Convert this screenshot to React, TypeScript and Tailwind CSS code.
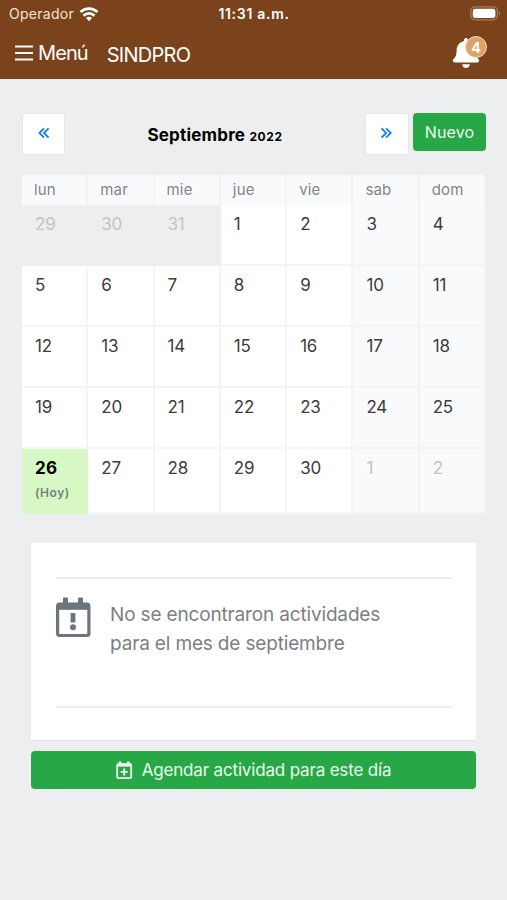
import { useState } from "react";
import clsx from "clsx";
import { BiChevronsLeft, BiChevronsRight } from "react-icons/bi";
import { FaBell } from "react-icons/fa";

const weekDays = ["lun", "mar", "mie", "jue", "vie", "sab", "dom"];

const weeks = [
    [29, 30, 31, 1, 2, 3, 4],
    [5, 6, 7, 8, 9, 10, 11],
    [12, 13, 14, 15, 16, 17, 18],
    [19, 20, 21, 22, 23, 24, 25],
    [26, 27, 28, 29, 30, 1, 2],
];

const today = 26;

function CalendarAlertIcon() {
    return (
        <svg className="shrink-0" width="35" height="41" viewBox="0 0 35 41" fill="currentColor">
            <rect x="7" y="0.5" width="5" height="7" rx="1" />
            <rect x="22" y="0.5" width="5" height="7" rx="1" />
            <rect x="1.6" y="7" width="31.3" height="31.5" rx="2" fill="none" stroke="currentColor" strokeWidth="3.2" />
            <path d="M1.5 6.5h31.5v6.3H1.5z" />
            <rect x="14.6" y="16" width="4.8" height="9.6" rx="0.6" />
            <circle cx="17" cy="30.3" r="3" />
        </svg>
    );
}

function CalendarPlusIcon() {
    return (
        <svg className="shrink-0" width="17" height="19" viewBox="0 0 17 19" fill="currentColor">
            <rect x="2.8" y="0.6" width="2.6" height="4" rx="0.6" />
            <rect x="11" y="0.6" width="2.6" height="4" rx="0.6" />
            <rect x="1.2" y="3.2" width="14" height="14" rx="1.2" fill="none" stroke="currentColor" strokeWidth="1.8" />
            <path d="M1 2.6h14.4v3H1z" />
            <path d="M8.2 7.4v7M4.7 10.9h7" stroke="currentColor" strokeWidth="1.9" />
        </svg>
    );
}

function StatusBar() {
    return (
        <div className="grid h-[28px] grid-cols-3 items-center pr-[6px] pl-[9px] text-[14px] leading-[28px]">
            <div className="flex items-center gap-[5px]">
                <span className="tracking-[0.28px] text-[#f3e4da]">Operador</span>
                <svg width="20" height="15" viewBox="0 0 20 15" fill="none" stroke="#fff" strokeWidth="2.7">
                    <path d="M1.5 5a12.2 12.2 0 0 1 17 0" />
                    <path d="M4.5 8.7a7.8 7.8 0 0 1 11 0" />
                    <path d="M10 14.3l-3-3.2a4.3 4.3 0 0 1 6 0z" fill="#fff" stroke="none" />
                </svg>
            </div>
            <span className="-ml-[2px] text-center font-semibold tracking-[0.7px] whitespace-nowrap">11:31 a.m.</span>
            <svg className="ml-auto" width="31" height="16" viewBox="0 0 31 16" fill="none">
                <rect x="0.8" y="0.8" width="26.6" height="13" rx="4" stroke="#a07b62" strokeWidth="1.3" />
                <rect x="2.8" y="2.7" width="22.6" height="9.2" rx="2.2" fill="#fff" />
                <path d="M29 5c1.6.8 1.6 3.8 0 4.6z" fill="#a07b62" />
            </svg>
        </div>
    );
}

function Header() {
    return (
        <header className="h-[79px] bg-[#7b431b] text-white">
            <StatusBar />
            <div className="flex h-[50px] items-center pr-[20px] pl-[15px] text-[20px]">
                <button className="flex items-center gap-[5px]">
                    <svg width="18" height="16" viewBox="0 0 18 16" stroke="#fff" strokeWidth="2">
                        <path d="M0 1.5h18M0 8h18M0 14.5h18" />
                    </svg>
                    <span className="tracking-[-0.9px]">Menú</span>
                </button>
                <span className="mt-[4px] ml-[19px] tracking-[-0.75px]">SINDPRO</span>
                <button className="relative ml-auto h-[30px] w-[35px]">
                    <FaBell className="-ml-[1px] text-[30px]" />
                    <span className="absolute -top-[2px] right-0 flex size-[22px] items-center justify-center rounded-full border border-[#f6dcc0] bg-[#dca366] text-[14px] font-bold">
                        4
                    </span>
                </button>
            </div>
        </header>
    );
}

export default function App() {
    const [selected, setSelected] = useState(today);

    return (
        <div className="h-[900px] w-[507px] overflow-hidden bg-[#eceef0] font-['Inter',sans-serif]">
            <Header />

            <main className="pt-[34px]">
                <div className="flex items-start pr-[21px] pl-[22px]">
                    <button className="flex h-[42px] w-[43px] items-center justify-center rounded-l-[4px] border border-[#e5e7ea] bg-white pb-[2px] text-[#147efb]">
                        <BiChevronsLeft className="text-[22px]" />
                    </button>
                    <h1 className="flex-1 pt-[9px] text-center text-[17px] leading-[27px] font-bold tracking-[0.2px] text-black">
                        Septiembre <span className="text-[12px] tracking-[0.6px]">2022</span>
                    </h1>
                    <button className="flex h-[42px] w-[44px] items-center justify-center border border-[#e5e7ea] bg-white pb-[2px] text-[#147efb]">
                        <BiChevronsRight className="text-[22px]" />
                    </button>
                    <button className="ml-[4px] h-[38px] w-[73px] rounded-[4px] bg-[#27a745] text-[16px] tracking-[0.1px] text-[#eefbf0]">
                        Nuevo
                    </button>
                </div>

                <section className="mt-[20px] ml-[22px] w-[464px]">
                    <div className="grid h-[30px] grid-cols-7">
                        {weekDays.map((day) => (
                            <div
                                key={day}
                                className="border-r-2 border-[#f2f3f5] bg-[#f9fafb] pl-[12px] text-[15px] leading-[30px] tracking-[0.15px] text-[#858585]"
                            >
                                {day}
                            </div>
                        ))}
                    </div>
                    {weeks.map((week, row) => (
                        <div key={row} className={clsx("grid grid-cols-7", row === 4 ? "h-[65px]" : "h-[61px]")}>
                            {week.map((day, col) => {
                                const outside = (row === 0 && day > 7) || (row === 4 && day < 7);
                                const isToday = row === 4 && day === selected;
                                return (
                                    <div
                                        key={col}
                                        onClick={() => !outside && setSelected(day)}
                                        className={clsx(
                                            "border-r-2 border-b-2 pt-[6px] pl-[13px] text-[17px] leading-[26px] tracking-[-0.2px]",
                                            outside ? "text-[#c2c4c6]" : "text-[#3c3c3c]",
                                            row === 0 && outside
                                                ? "border-[#eceef0] bg-[#eceef0]"
                                                : isToday
                                                  ? "border-[#d7f8c4] bg-[#d7f8c4]"
                                                  : col > 4
                                                    ? "border-[#f3f4f6] bg-[#f9fafb]"
                                                    : "border-[#f4f5f6] bg-white",
                                        )}
                                    >
                                        <span className={clsx(isToday && "font-bold tracking-[0.2px] text-black")}>
                                            {day}
                                        </span>
                                        {isToday && (
                                            <small className="block text-[12px] leading-[24px] font-semibold tracking-[0.5px] text-[#71837a]">
                                                (Hoy)
                                            </small>
                                        )}
                                    </div>
                                );
                            })}
                        </div>
                    ))}
                </section>

                <section className="mx-[31px] mt-[29px] h-[198px] border-b border-[#dfe1e4] bg-white pt-[34px] pr-[24px] pl-[25px]">
                    <div className="flex h-[131px] border-y-2 border-[#eceef0] pt-[18px] text-[#6c757d]">
                        <CalendarAlertIcon />
                        <p className="ml-[19px] pt-[3px] text-[19px] leading-[29px] tracking-[-0.16px] text-[#7b8085]">
                            No se encontraron actividades
                            <br />
                            para el mes de septiembre
                        </p>
                    </div>
                </section>

                <button className="mx-[31px] mt-[10px] flex h-[38px] w-[445px] items-center justify-center gap-[9px] rounded-[4px] bg-[#27a745] text-[17px] tracking-[-0.17px] text-[#eefbf0]">
                    <CalendarPlusIcon />
                    <span className="pt-[1px]">Agendar actividad para este día</span>
                </button>
            </main>
        </div>
    );
}
